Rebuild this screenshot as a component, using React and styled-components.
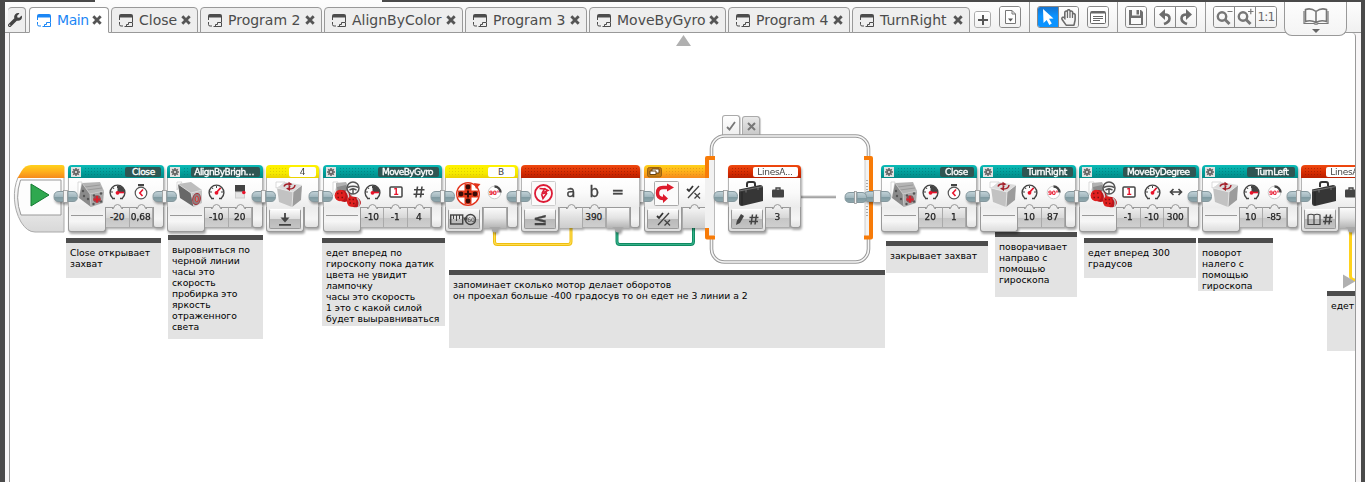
import React from "react";
import styled, { createGlobalStyle, css } from "styled-components";
import { FaWrench, FaRegHandPaper } from "react-icons/fa";

const Global = createGlobalStyle`
  * { box-sizing: border-box; }
  body { margin: 0; background: #4a4a4a; font-family: "DejaVu Sans", sans-serif; overflow: hidden; }
  svg { display: block; flex: none; overflow: visible; }
`;

/* ---------- window frame ---------- */
const Frame = styled.div`
  width: 1365px;
  height: 482px;
  padding: 2px 4px 0 5px;
  display: flex;
  flex-direction: column;
  background: linear-gradient(#fdfdfd, #fdfdfd) 95px 0 / 287px 2px no-repeat, #4a4a4a;
`;
const Bar = styled.div`
  height: 31px;
  flex: none;
  display: flex;
  align-items: flex-end;
  padding-left: 3px;
  position: relative;
  z-index: 2;
  background: linear-gradient(#fdfdfd, #f0f0f0);
  box-shadow: inset 0 -1px #999;
`;
const Main = styled.div`
  flex: 1;
  display: flex;
  padding: 0 5px 0 4px;
  background: #f8f6f7;
`;
const Canvas = styled.div`
  flex: 1;
  position: relative;
  overflow: hidden;
  background: #fff;
  border-left: 1px solid #999;
  border-right: 1px solid #999;
  border-top-right-radius: 4px;
`;

/* ---------- tabs ---------- */
const Tab = styled.div`
  width: ${(p) => p.$w}px;
  height: 26px;
  margin-right: 2px;
  padding-left: 7px;
  display: flex;
  align-items: center;
  border: 1px solid #999;
  border-bottom-color: ${(p) => (p.$active ? "#fff" : "#999")};
  border-radius: 4px 4px 0 0;
  background: ${(p) => (p.$active ? "#fff" : "#eeeeee")};
  color: ${(p) => (p.$active ? "#1c87f5" : "#4c4c4c")};
  font-size: 14px;
  letter-spacing: ${(p) => (p.$active ? -0.4 : 0)}px;
  white-space: nowrap;
`;
const TabText = styled.span`
  flex: 1;
  margin-left: 6px;
`;
const CloseX = styled.svg`
  margin-right: 6px;
  color: #555;
`;
const WrenchTab = styled(Tab)`
  padding-left: 0;
  border-left: 0;
  margin-right: 3px;
  color: #444;
`;

const PageIcon = () => (
  <svg width="14" height="13" viewBox="0 0 14 13" fill="none" stroke="currentColor">
    <path d="M.5 2.500V6M.5 8V10.500Q.5 12 2 12H4M5.500 12.500H8M13.500 2.500V8" />
    <path d="M0 3.500V2Q0 0 2 0H12Q14 0 14 2V3.500Z" fill="currentColor" stroke="none" />
    <path d="M7.500 12.500V10.500H9.500V8.500H13.500V12.500Z" />
  </svg>
);
const X = () => (
  <CloseX width="10" height="10" viewBox="0 0 10 10">
    <path d="M1.300 1.300L8.700 8.700M8.700 1.300L1.300 8.700" stroke="currentColor" strokeWidth="2.800" />
  </CloseX>
);

/* ---------- toolbar ---------- */
const Tools = styled.div`
  height: 31px;
  flex: 1;
  display: flex;
  align-items: flex-start;
`;
const Group = styled.div`
  display: flex;
  height: 22px;
  margin: 4px 0 0 ${(p) => p.$ml}px;
  border: 1px solid #888;
  border-radius: 3px;
  background: #fafafa;
  overflow: hidden;
`;
const Tool = styled.div`
  width: ${(p) => p.$w || 20}px;
  height: 20px;
  display: flex;
  align-items: center;
  justify-content: center;
  color: ${(p) => (p.$on ? "#fff" : "#6b6b6b")};
  background: ${(p) => (p.$on ? "linear-gradient(#1573cf, #0b93ff 45%)" : "linear-gradient(#fff, #f1f1f1)")};
  font: 12px "DejaVu Sans", sans-serif;
  letter-spacing: -0.8px;
  & + & { border-left: 1px solid #888; }
`;
const AddTab = styled(Group)`
  height: 17px;
  margin: 9px 0 0 ${(p) => p.$ml}px;
  border-color: #aaa;
  ${Tool} { height: 15px; width: 15px; }
`;
const Divider = styled.div`
  width: 1px;
  height: 31px;
  margin-left: ${(p) => p.$ml}px;
  background: #999;
`;
const BookTab = styled.div`
  width: 63px;
  height: 34px;
  margin-left: 7px;
  display: flex;
  flex-direction: column;
  align-items: center;
  padding-top: 5px;
  gap: 4px;
  background: linear-gradient(#fdfdfd, #f4f4f4);
  border: 1px solid #999;
  border-top: 0;
  border-radius: 0 0 8px 8px;
`;

const Magnifier = ({ plus }) => (
  <svg width="18" height="18" viewBox="0 0 18 18" fill="none" stroke="#777">
    <circle cx="7" cy="8.500" r="4.200" strokeWidth="2.400" />
    <path d="M10 11.500L14.500 16" strokeWidth="3" />
    <path d={plus ? "M12 3.500H17.500M14.800 .8V6.200" : "M12.500 3.500H17.500"} strokeWidth="1.200" />
  </svg>
);
const Turn = ({ flip }) => (
  <svg width="14" height="16" viewBox="0 0 14 16">
    <g transform={flip ? "translate(14 0) scale(-1 1)" : undefined}>
      <path d="M1 5.500L7 0V11Z" fill="#6b6b6b" />
      <path d="M5 5.500H6.500Q11.500 5.500 11.500 9.500Q11.500 13 6 15" fill="none" stroke="#6b6b6b" strokeWidth="2.600" />
    </g>
  </svg>
);

/* ---------- block icons ---------- */
const GyroIcon = () => (
  <svg width="26" height="27" viewBox="0 0 26 27">
    <path d="M0 7V1H9L3 6Z" fill="#fff" stroke="#ccc" strokeWidth=".7" />
    <path d="M1 7L9 1L26 4L17 11Z" fill="#dcdcdc" />
    <path d="M1 7L17 11L16 26L3 21Z" fill="#c2c2c2" />
    <path d="M17 11L26 4L25 19L16 26Z" fill="#9c9c9c" />
    <path d="M1 7L17 11L26 4M17 11L16 26" fill="none" stroke="#ececec" strokeWidth=".8" />
    <path d="M8 5.500Q9 2.500 13 3M19 4Q18.500 8 13.500 8" fill="none" stroke="#a5202a" strokeWidth="1.500" />
    <path d="M12.500 .8L16.500 3.200L12.500 5ZM14 5.800L10 7.600L14 10Z" fill="#a5202a" />
    <circle cx="13.500" cy="5.500" r="1" fill="#a5202a" />
  </svg>
);
const MotorIcon = () => (
  <svg width="26" height="27" viewBox="0 0 26 27">
    <path d="M0 17V1H4L2 12Z" fill="#fff" stroke="#ccc" strokeWidth=".7" />
    <path d="M4 2L22 1L26 10L12 13Z" fill="#b4b4b4" />
    <path d="M4 2L12 13L13 26L1 17Z" fill="#8a8a8a" />
    <path d="M12 13L26 10L25 22L13 26Z" fill="#a9a9a9" />
    <path d="M7 6L22 4M9 9L24 7" stroke="#9a9a9a" />
    <path d="M4 2L12 13L26 10M12 13L13 26" fill="none" stroke="#c9c9c9" strokeWidth=".8" />
    <g fill="#555">
      <circle cx="5" cy="10" r="1.200" /><circle cx="6" cy="15" r="1.200" /><circle cx="10" cy="18" r="1.200" />
      <circle cx="16" cy="14.500" r="1.200" /><circle cx="23" cy="12.500" r="1.200" /><circle cx="15.500" cy="23" r="1.200" /><circle cx="23" cy="20.500" r="1.200" />
    </g>
    <circle cx="19" cy="18" r="3.800" fill="#8d5356" />
    <path d="M15.500 18.500H22.500M19 15V21.500" stroke="#d8202c" strokeWidth="2" />
  </svg>
);
const SensorIcon = () => (
  <svg width="26" height="27" viewBox="0 0 26 27">
    <path d="M0 9V1H5L2 5Z" fill="#fff" stroke="#ccc" strokeWidth=".7" />
    <path d="M1 3L14 1L25 9L14 12Z" fill="#bdbdbd" />
    <path d="M1 3L14 12L17 26L3 17Z" fill="#686868" />
    <path d="M14 12L25 9V22L17 26Z" fill="#c4c4c4" />
    <path d="M14 12L25 9M14 12L17 26M1 3L14 12" fill="none" stroke="#ddd" strokeWidth=".8" />
    <ellipse cx="19.500" cy="18" rx="3.800" ry="5.600" fill="#8d8080" stroke="#a5323a" transform="rotate(12 19.500 18)" />
    <ellipse cx="19.800" cy="18" rx="1.600" ry="2.800" fill="#999" stroke="#d33" />
  </svg>
);
const WheelsIcon = () => (
  <svg width="28" height="27" viewBox="0 0 28 27">
    <path d="M0 14V1H5L3 8Z" fill="#fff" stroke="#ccc" strokeWidth=".7" />
    <path d="M3 2L13 1L17 9L20 17L9 20L3 10Z" fill="#b2b2b2" />
    <path d="M4 6L13 4L15 11L5 14Z" fill="#8c8c8c" />
    <circle cx="20" cy="7" r="6" fill="#fafafa" stroke="#555" strokeWidth="1.500" />
    <path d="M14.500 6.500Q20 4 25.500 6.500M20 7V13M16.500 9L20 7.500L23.500 9" fill="none" stroke="#555" strokeWidth="1.500" />
    <ellipse cx="10.500" cy="15" rx="7.500" ry="5.800" fill="#bb151b" transform="rotate(15 10.500 15)" />
    <ellipse cx="7" cy="14.500" rx="5.400" ry="5.800" fill="#e0201f" />
    <path d="M13 10Q17 14 15 20" fill="none" stroke="#d5d5d5" strokeWidth="1.600" />
    <ellipse cx="21.500" cy="21" rx="6.500" ry="5.200" fill="#bb151b" transform="rotate(15 21.500 21)" />
    <ellipse cx="18.500" cy="20.500" rx="4.600" ry="5.200" fill="#e0201f" />
    <path d="M24 17Q27.500 20.500 25.500 26" fill="none" stroke="#bbb" strokeWidth="1.500" />
    <path d="M4 12.500H5.500M8 12H9.500M4.500 16.500H6M8.500 16.500H10M16 18.500H17.500M19.500 18.500H21M16.500 22H18M20 22.500H21.500" stroke="#7b1010" strokeWidth="1.500" />
  </svg>
);
const RotationIcon = () => (
  <svg width="26" height="26" viewBox="0 0 26 26">
    <circle cx="13" cy="13" r="11.300" fill="#fff" stroke="#e3331c" strokeWidth="1.400" />
    <path d="M9.500 3H16.500V9.500H23V16.500H16.500V23H9.500V16.500H3V9.500H9.500Z" fill="#e3391b" />
    <g fill="#3a0d08"><circle cx="13" cy="6" r="2.400" /><circle cx="13" cy="20" r="2.400" /><circle cx="6" cy="13" r="2.400" /><circle cx="20" cy="13" r="2.400" /><path d="M9.500 12H12V9.500H14V12H16.500V14H14V16.500H12V14H9.500Z" /></g>
    <path d="M19 2L25.500 3L21 8Z" fill="#e3331c" />
  </svg>
);
const CaseIcon = () => (
  <svg width="26" height="25" viewBox="0 0 26 25">
    <path d="M9 6V3Q9 1 11 1H15Q17 1 17 3V5" fill="none" stroke="#333" strokeWidth="2" />
    <path d="M1 8.500L22 4Q25 4 25 7V20L4 25Q1 25 1 22Z" fill="#363636" />
    <path d="M1 10L25 5.500M8 8V11.500M20 6V9" fill="none" stroke="#777" strokeWidth="1" />
    <path d="M4 11V24" stroke="#222" />
  </svg>
);
const FlatCase = () => (
  <svg width="12" height="11" viewBox="0 0 12 11">
    <path d="M4 3V1H8V3" fill="none" stroke="#444" strokeWidth="1.300" />
    <rect y="2.500" width="12" height="8" rx="1" fill="#444" />
  </svg>
);
const CompareIcon = () => (
  <svg width="26" height="26" viewBox="0 0 26 26">
    <rect x=".5" y=".5" width="24" height="24" rx="1" fill="#fbfbfb" stroke="#ccc" />
    <circle cx="12.500" cy="12.500" r="8.500" fill="none" stroke="#dd1b35" strokeWidth="1.800" />
    <path d="M8.500 7.500L13.500 8L11 12.500M10.500 13L16 11.500M16 12L12 17.500L10.500 13" fill="none" stroke="#dd1b35" strokeWidth="1.600" />
    <path d="M13 7.500L17 9.500L12.500 11.500" fill="none" stroke="#dd1b35" strokeWidth="1.500" />
  </svg>
);
const SwitchIcon = () => (
  <svg width="26" height="26" viewBox="0 0 26 26">
    <rect x=".5" y=".5" width="24" height="24" rx="1" fill="#fbfbfb" stroke="#aaa" />
    <path d="M14 6.500H9Q3.500 6.500 3.500 12Q3.500 17.500 9 17.500H11" fill="none" stroke="#dd1b2c" strokeWidth="3.400" />
    <path d="M13 2.500L20 6.500L13 10.500ZM9 13L14 17.500L9 22Z" fill="#dd1b2c" />
  </svg>
);
const Gauge = ({ power }) => (
  <svg width="17" height="16" viewBox="0 0 17 16">
    <path d="M3.500 14A7.400 7.400 0 1 1 13.500 14M3 14.500H6M11 14.500H14" fill="none" stroke="#444" strokeWidth="1.400" />
    <path d="M8.500 2V4M2 8H4M15 8H13M4 3.500L5 5M13 3.500L12 5" stroke="#444" />
    {power ? (
      <><path d="M8.500 8.500V1.500A7 7 0 0 1 15.500 8.500Z" fill="#444" /><path d="M8 8.500H15" stroke="#e8132b" strokeWidth="1.600" /></>
    ) : (
      <path d="M8 9L12.500 4" stroke="#e8132b" strokeWidth="1.800" />
    )}
    <circle cx="8.500" cy="8.800" r="1.900" fill="#e8132b" />
  </svg>
);
const Stopwatch = () => (
  <svg width="14" height="16" viewBox="0 0 14 16">
    <rect x="4" y="0" width="6" height="2.200" fill="#444" />
    <circle cx="7" cy="9" r="5.800" fill="#fff" stroke="#555" strokeWidth="1.200" />
    <path d="M9 5.500L5.800 9L8.500 12" fill="none" stroke="#e8132b" strokeWidth="1.600" />
  </svg>
);
const ColorCard = () => (
  <svg width="12" height="14" viewBox="0 0 12 14">
    <rect x="1" y="0" width="10" height="7" fill="#444" />
    <rect x="1.500" y="7" width="9" height="6" fill="#e5e5e5" stroke="#ccc" />
    <circle cx="9.800" cy="7.500" r="1.800" fill="#e8132b" />
  </svg>
);
const Angle = () => (
  <svg width="15" height="15" viewBox="0 0 15 15">
    <circle cx="7.500" cy="7.500" r="6.300" fill="#fff" stroke="#ccc" />
    <path d="M7.500 1.500A6 6 0 0 1 13.500 7.500" fill="none" stroke="#444" strokeWidth="2.400" />
    <text x="7" y="10" fontSize="6" fontWeight="bold" textAnchor="middle" fill="#e8132b" letterSpacing="-.5">90°</text>
  </svg>
);
const OneBox = () => (
  <svg width="14" height="12" viewBox="0 0 14 12">
    <rect x="1" y="1" width="12" height="10" rx="1" fill="#fff" stroke="#444" strokeWidth="1.500" />
    <text x="7" y="9" fontSize="8" fontWeight="bold" textAnchor="middle" fill="#e8132b">1</text>
  </svg>
);
const Glyph = styled.span`
  color: #444;
  font-size: ${(p) => p.$s || 14}px;
  font-weight: ${(p) => (p.$b ? "bold" : "normal")};
  line-height: 16px;
  -webkit-text-stroke: 0.3px #444;
`;
const TwoWay = () => (
  <svg width="14" height="8" viewBox="0 0 14 8">
    <path d="M2 4H12M4.500 1L1.500 4L4.500 7M9.500 1L12.500 4L9.500 7" fill="none" stroke="#444" strokeWidth="1.600" />
  </svg>
);
const CheckCross = () => (
  <svg width="15" height="14" viewBox="0 0 15 14">
    <path d="M1 4L3 6L7 1" fill="none" stroke="#333" strokeWidth="1.800" />
    <path d="M2 13L13 1M8.500 8L14 13.500M14 8L8.500 13.500" fill="none" stroke="#444" strokeWidth="1.300" />
  </svg>
);
const Download = () => (
  <svg width="14" height="13" viewBox="0 0 14 13">
    <path d="M7 0V6M1 11.800H13" stroke="#444" strokeWidth="1.800" />
    <path d="M2.500 4.500H11.500L7 9.500Z" fill="#444" />
  </svg>
);
const RulerDeg = () => (
  <svg width="28" height="13" viewBox="0 0 28 13" fill="none" stroke="#444">
    <rect x=".7" y="2" width="12" height="9" strokeWidth="1.400" />
    <path d="M3.500 2V6M6.500 2V8M9.500 2V6" />
    <circle cx="20.500" cy="6.500" r="5" strokeWidth="1.400" />
    <path d="M13 4.500L15.500 9L18 4.500Z" fill="#444" stroke="none" />
    <text x="21" y="9" fontSize="6" textAnchor="middle" fill="#444" stroke="none">60</text>
  </svg>
);
const PencilHash = () => (
  <svg width="24" height="13" viewBox="0 0 24 13">
    <path d="M1 12L1.800 8L6 1L9 3L5 10Z" fill="#444" />
    <path d="M17.500 1.500L16 11.500M21.500 1.500L20 11.500M14.500 4.500H23.500M14 8.500H23" stroke="#444" strokeWidth="1.500" />
  </svg>
);
const BookHash = () => (
  <svg width="26" height="13" viewBox="0 0 26 13" fill="none" stroke="#444">
    <path d="M1 2Q4 .5 7 2Q10 .5 13 2V11.500H1ZM7 2V11.500" strokeWidth="1.200" />
    <path d="M19.500 1.500L18 11.500M23.500 1.500L22 11.500M16.500 4.500H25.500M16 8.500H25" strokeWidth="1.500" />
  </svg>
);
const Gear = () => (
  <svg width="8" height="8" viewBox="0 0 8 8">
    <circle cx="4" cy="4" r="2" fill="none" stroke="#666" strokeWidth="1.800" />
    <path d="M4 0V1.500M4 6.500V8M0 4H1.500M6.500 4H8M1.200 1.200L2.300 2.300M5.700 5.700L6.800 6.800M6.800 1.200L5.700 2.300M2.300 5.700L1.200 6.800" stroke="#666" strokeWidth="1.500" />
  </svg>
);

/* ---------- programming blocks ---------- */
const HEAD = {
  teal: "linear-gradient(#0cbcb8, #009c98 60%, #048a87)",
  yellow: "linear-gradient(#fff200, #f7ec00 60%, #ead000)",
  red: "linear-gradient(#f04a10, #d42a00 60%, #b82000)",
  orange: "linear-gradient(#ffd21c, #ffb01c 50%, #f58a1c)",
};
const DOTS = { teal: "#00706f", yellow: "#c9b800", red: "#8a1500", orange: "#d08a10" };

const BlockBox = styled.div`
  position: absolute;
  left: ${(p) => p.$x - 10}px;
  top: 132px;
  filter: drop-shadow(1px 2px 1px rgba(0, 0, 0, 0.35));
`;
const Header = styled.div`
  height: 13px;
  display: flex;
  align-items: center;
  gap: 3px;
  padding: 0 3px;
  border-radius: ${(p) => (p.$open ? "4px 0 0 0" : "4px 4px 0 0")};
  background: ${(p) => HEAD[p.$c]};
`;
const GearBox = styled.div`
  width: 10px;
  height: 10px;
  display: flex;
  align-items: center;
  justify-content: center;
  background: #e2e2e2;
`;
const Dots = styled.div`
  flex: 1;
  height: 9px;
  opacity: 0.55;
  background: radial-gradient(circle, ${(p) => DOTS[p.$c]} 0.8px, transparent 1px) 0 0 / 3px 3px;
`;
const Label = styled.div`
  width: ${(p) => p.$w}px;
  height: 10px;
  line-height: 10px;
  padding-right: ${(p) => (p.$light ? 0 : 6)}px;
  font-size: 9px;
  letter-spacing: ${(p) => p.$ls || -0.3}px;
  white-space: nowrap;
  text-align: ${(p) => (p.$light ? "center" : "right")};
  color: ${(p) => (p.$light ? "#444" : "#fff")};
  -webkit-text-stroke: ${(p) => (p.$light ? "0" : "0.35px #fff")};
  background: ${(p) => (p.$light ? "#fff" : "#2f5653")};
  border-radius: 2px;
`;
const Upper = styled.div`
  height: 29px;
  display: flex;
  background: linear-gradient(#fff, #fafafa 50%, #ececec);
  border-left: 1px solid #b5b5b5;
  border-right: ${(p) => (p.$open ? 0 : "1px solid #b5b5b5")};
`;
const BigIcon = styled.div`
  width: 37px;
  padding: 3px 0 0 9px;
  position: relative;
  z-index: 1;
`;
const ParamIcon = styled.div`
  width: 23.5px;
  height: 28px;
  display: flex;
  align-items: center;
  justify-content: center;
`;
const Lower = styled.div`
  display: flex;
  align-items: flex-start;
  height: 25px;
`;
const Tray = styled.div`
  width: 38px;
  height: 25px;
  padding: ${(p) => (p.$btn ? "2px 2px" : "8px 2px 0")};
  border: 1px solid #999;
  border-width: 0 1px 1px;
  border-radius: 0 0 3px 3px;
  background: linear-gradient(#ececec, #f6f6f6 60%, #ddd);
`;
const TrayLine = styled.div`
  height: 1px;
  background: #999;
`;
const ModeButton = styled.div`
  height: 20px;
  display: flex;
  align-items: center;
  justify-content: center;
  border: 1px solid #999;
  border-top-color: #fff;
  border-radius: 2px;
  background: linear-gradient(#fafafa, #dedede 48%, #b9b9b9 52%, #c4c4c4);
`;
const Slot = styled.div`
  position: relative;
  width: 23.5px;
  height: ${(p) => (p.$kind ? 21 : 20)}px;
  display: flex;
  align-items: center;
  justify-content: center;
  padding-bottom: 2px;
  font-size: 9px;
  color: #222;
  -webkit-text-stroke: 0.25px #222;
  border-top: 1px solid #999;
  border-right: 1px solid #aaa;
  background: linear-gradient(#ededed, #d8d8d8 50%, #c6c6c6 52%, #cfcfcf);
  ${(p) => p.$kind && css`
    border-left: 1px solid #aaa;
    background: linear-gradient(#fafafa, #e3e3e3 50%, #b4b4b4);
  `}
  ${(p) => p.$kind === "in" && css`
    background: linear-gradient(#f4f4f4, #dfdfdf 50%, #cdcdcd);
  `}
`;
const Bump = styled.svg`
  position: absolute;
  left: 6px;
  top: -4px;
`;
const Plug = styled.svg`
  position: absolute;
  left: 5px;
  bottom: -5px;
`;
const Cap = styled.div`
  width: ${(p) => p.$w}px;
  height: 21px;
  border: 1px solid #999;
  border-width: 0 1px 1px;
  border-radius: 0 0 3px 3px;
  background: linear-gradient(#ececec, #f5f5f5 60%, #e2e2e2);
`;
const Joint = styled.svg`
  position: absolute;
  left: ${(p) => p.$x}px;
  top: ${(p) => p.$y}px;
`;

const Connector = ({ x, y, collar = 4 }) => {
  const r = 11 + collar;
  return (
    <Joint $x={x} $y={y} width={22 + collar} height="13" viewBox={`0 0 ${22 + collar} 13`}>
      <defs>
        <linearGradient id="pill" x1="0" y1="0" x2="0" y2="1">
          <stop offset="0" stopColor="#c3d3d8" /><stop offset=".5" stopColor="#a3b8bf" /><stop offset=".52" stopColor="#7d989f" /><stop offset="1" stopColor="#91a9af" />
        </linearGradient>
      </defs>
      <path d="M11 1.500H6Q1 1.500 1 6.500Q1 11.500 6 11.500H11Z" fill="url(#pill)" stroke="#84979d" />
      <rect x="10.500" y=".5" width={collar} height="12" fill="#f2f2f2" stroke="#9a9a9a" strokeWidth=".8" />
      <path d={`M${r} 1.500H${r + 5}Q${r + 9.5} 1.500 ${r + 9.5} 6.500Q${r + 9.5} 11.500 ${r + 5} 11.500H${r}Z`} fill="url(#pill)" stroke="#84979d" />
    </Joint>
  );
};

const Block = ({ x, c, gear, label, lw, ls, light, big, params = [], mode, cap = 11, open, headIcon, collar = 4 }) => (
  <BlockBox $x={x}>
    <Header $c={c} $open={open}>
      {gear && <GearBox><Gear /></GearBox>}
      {headIcon}
      <Dots $c={c} />
      {label && <Label $w={lw} $ls={ls} $light={light}>{label}</Label>}
    </Header>
    <Upper $open={open}>
      <BigIcon>{big}</BigIcon>
      {params.map((p, i) => <ParamIcon key={i}>{p.icon}</ParamIcon>)}
    </Upper>
    <Lower>
      <Tray $btn={!!mode}>{mode ? <ModeButton>{mode}</ModeButton> : <TrayLine />}</Tray>
      {params.map((p, i) => (
        <Slot key={i} $kind={p.kind}>
          {p.kind !== "out" && (
            <Bump width="11" height="6" viewBox="0 0 11 6">
              <path d="M0 4.500H1.500Q2 .5 5.500 .5Q9 .5 9.500 4.500H11" fill="#eee" stroke="#999" />
            </Bump>
          )}
          {p.value}
          {p.kind === "out" && (
            <Plug width="12" height="6" viewBox="0 0 12 6"><path d="M0 0H12L9 2V4Q6 7 3 4V2Z" fill="#a8a8a8" /></Plug>
          )}
        </Slot>
      ))}
      <Cap $w={cap} />
    </Lower>
    <Connector x={-11 - collar} y={25} collar={collar} />
  </BlockBox>
);

/* ---------- comments ---------- */
const NoteBox = styled.div`
  position: absolute;
  left: ${(p) => p.$x - 10}px;
  top: ${(p) => p.$y - 33}px;
  width: ${(p) => p.$w}px;
  height: ${(p) => p.$h}px;
  padding: 4px 0 0 4px;
  border-top: 5px solid #4c4c4c;
  background: #e3e3e3;
  color: #000;
  font-size: 9.25px;
  line-height: 11px;
  white-space: pre;
`;

/* ---------- canvas drawings ---------- */
const Layer = styled.svg`
  position: absolute;
  left: -10px;
  top: -33px;
`;
const CaseTab = styled.div`
  position: absolute;
  left: ${(p) => p.$x - 10}px;
  top: ${(p) => p.$y - 33}px;
  width: 18px;
  height: ${(p) => 135 - p.$y}px;
  display: flex;
  align-items: center;
  justify-content: center;
  border: 1px solid #aaa;
  border-bottom: 0;
  border-radius: 3px 3px 0 0;
  background: ${(p) => (p.$on ? "linear-gradient(#fff, #eee)" : "linear-gradient(#e8e8e8, #c8c8c8)")};
  box-shadow: 1px 1px 1px rgba(0, 0, 0, 0.2);
`;

const tabs = [
  ["Main", 80], ["Close", 87], ["Program 2", 122], ["AlignByColor", 139],
  ["Program 3", 122], ["MoveByGyro", 137], ["Program 4", 122], ["TurnRight", 118],
];

const hash = (
  <svg width="12" height="12" viewBox="0 0 12 12"><path d="M4.500 .5L3 11.500M9 .5L7.500 11.500M1 3.800H11.500M.5 8.200H11" stroke="#444" strokeWidth="1.600" /></svg>
);

const blocks = [
  { x: 68, c: "teal", gear: 1, label: "Close", lw: 36, big: <MotorIcon />, params: [{ icon: <Gauge power />, value: "-20" }, { icon: <Stopwatch />, value: "0,68" }] },
  { x: 167, c: "teal", gear: 1, label: "AlignByBrigh…", lw: 69, ls: -0.55, big: <SensorIcon />, params: [{ icon: <Gauge />, value: "-10" }, { icon: <ColorCard />, value: "20" }] },
  { x: 266, c: "yellow", label: "4", lw: 27, light: 1, big: <GyroIcon />, mode: <Download />, cap: 15 },
  { x: 322.5, c: "teal", gear: 1, label: "MoveByGyro", lw: 61, ls: -0.6, big: <WheelsIcon />, params: [{ icon: <Gauge power />, value: "-10" }, { icon: <OneBox />, value: "-1" }, { icon: hash, value: "4" }] },
  { x: 445, c: "yellow", label: "B", lw: 27, light: 1, big: <RotationIcon />, mode: <RulerDeg />, params: [{ icon: <Angle />, kind: "out" }] },
  { x: 521, c: "red", big: <CompareIcon />, mode: <Glyph $s={17} $b>≤</Glyph>, params: [{ icon: <Glyph $s={15}>a</Glyph>, kind: "in" }, { icon: <Glyph $s={15}>b</Glyph>, value: "390" }, { icon: <Glyph $s={15}>=</Glyph>, kind: "out" }], cap: 10 },
  { x: 728, c: "red", label: "LinesA...", lw: 45, light: 1, big: <CaseIcon />, mode: <PencilHash />, params: [{ icon: <FlatCase />, value: "3" }] },
  { x: 881, c: "teal", gear: 1, label: "Close", lw: 34, big: <MotorIcon />, collar: 7, params: [{ icon: <Gauge power />, value: "20" }, { icon: <Stopwatch />, value: "1" }] },
  { x: 980, c: "teal", gear: 1, label: "TurnRight", lw: 51, ls: -0.35, big: <GyroIcon />, params: [{ icon: <Gauge />, value: "10" }, { icon: <Angle />, value: "87" }] },
  { x: 1079, c: "teal", gear: 1, label: "MoveByDegree", lw: 73, ls: -0.5, big: <WheelsIcon />, params: [{ icon: <OneBox />, value: "-1" }, { icon: <Gauge />, value: "-10" }, { icon: <TwoWay />, value: "300" }] },
  { x: 1201.5, c: "teal", gear: 1, label: "TurnLeft", lw: 48, ls: -0.4, big: <GyroIcon />, params: [{ icon: <Gauge power />, value: "10" }, { icon: <Angle />, value: "-85" }] },
  { x: 1301, c: "red", label: "LinesA...", lw: 45, light: 1, big: <CaseIcon />, mode: <BookHash />, params: [{ icon: <FlatCase />, kind: "out" }] },
];

const notes = [
  [66, 238, 95, 40, "Close открывает\nзахват"],
  [168, 235, 95, 104, "выровниться по\nчерной линии\nчасы это\nскорость\nпробирка это\nяркость\nотраженного\nсвета"],
  [322, 238, 123, 88, "едет вперед по\nгироскопу пока датик\nцвета не увидит\nлампочку\nчасы это скорость\n1 это с какой силой\nбудет выыравниваться"],
  [449, 270, 436, 78, "запоминает сколько мотор делает оборотов\nон проехал больше -400 градосув то он едет не 3 линии а 2"],
  [886, 241, 102, 32, "закрывает захват"],
  [995, 232, 82, 65, "поворачивает\nнаправо с\nпомощью\nгироскопа"],
  [1084, 238, 112, 40, "едет вперед 300\nградусов"],
  [1198, 238, 75, 53, "поворот\nналего с\nпомощью\nгироскопа"],
  [1327, 291, 60, 60, "едет"],
];

const FoldIcon = () => (
  <svg width="15" height="10" viewBox="0 0 15 10">
    <rect x=".5" y=".5" width="14" height="9.500" rx="2" fill="#c27a10" stroke="#9c6410" />
    <path d="M5 2H12V6H5Z" fill="#fff" stroke="#6b4410" /><path d="M3 4H9V7.500H3Z" fill="#fff" stroke="#6b4410" />
  </svg>
);

export default function App() {
  return (
    <Frame>
      <Global />
      <Bar>
        <WrenchTab $w={18}><FaWrench size={14} /></WrenchTab>
        {tabs.map(([t, w], i) => (
          <Tab key={t} $w={w} $active={i === 0}>
            <PageIcon /><TabText>{t}</TabText><X />
          </Tab>
        ))}
        <Tools>
          <AddTab $ml={2}><Tool><svg width="10" height="10" viewBox="0 0 10 10"><path d="M5 0V10M0 5H10" stroke="#555" strokeWidth="2" /></svg></Tool></AddTab>
          <Group $ml={8}><Tool>
            <svg width="11" height="14" viewBox="0 0 11 14"><path d="M.5 .5H7L10.500 4V13.500H.5ZM7 .5V4H10.500" fill="#fff" stroke="#777" /><path d="M3 8.500H8L5.500 11.500Z" fill="#555" /></svg>
          </Tool></Group>
          <Divider $ml={8} />
          <Group $ml={7}>
            <Tool $on>
              <svg width="12" height="16" viewBox="0 0 12 16"><path d="M1 0L11.500 9.500L7 9.800L9.800 14.500L7.300 16L4.700 11L1.500 14Z" fill="#fff" /></svg>
            </Tool>
            <Tool><FaRegHandPaper size={17} /></Tool>
          </Group>
          <Group $ml={8}><Tool>
            <svg width="16" height="13" viewBox="0 0 16 13"><rect x=".5" y=".5" width="15" height="12" rx="1" fill="#fff" stroke="#666" /><path d="M1 1.500H15" stroke="#666" strokeWidth="2" /><path d="M3 5.500H13M3 7.500H13M3 9.500H10" stroke="#666" /></svg>
          </Tool></Group>
          <Divider $ml={8} />
          <Group $ml={7}><Tool>
            <svg width="14" height="15" viewBox="0 0 14 15"><path d="M0 0H12L14 2V15H0Z" fill="#6f6f6f" /><rect x="3" y="0" width="8" height="5.500" fill="#fafafa" /><rect x="7.500" y="0" width="2.500" height="4.500" fill="#6f6f6f" /><rect x="2" y="8" width="10" height="6" fill="#fafafa" /></svg>
          </Tool></Group>
          <Group $ml={7}><Tool><Turn /></Tool><Tool $w={21}><Turn flip /></Tool></Group>
          <Divider $ml={8} />
          <Group $ml={7}><Tool><Magnifier /></Tool><Tool $w={21}><Magnifier plus /></Tool><Tool $w={21}>1:1</Tool></Group>
          <BookTab>
            <svg width="26" height="18" viewBox="0 0 26 18" fill="none" stroke="#777" strokeWidth="1.600">
              <path d="M13 4.500Q8 .5 2.500 2.500V14.500Q8 12.500 13 15.500Q18 12.500 23.500 14.500V2.500Q18 .5 13 4.500V15" />
              <path d="M1 4V16.500H11Q13 18 15 16.500H25V4" strokeWidth="1.200" />
            </svg>
            <svg width="8" height="4" viewBox="0 0 8 4"><path d="M0 0H8L4 4Z" fill="#666" /></svg>
          </BookTab>
        </Tools>
      </Bar>
      <Main>
        <Canvas>
          {notes.map(([x, y, w, h, t]) => <NoteBox key={x} $x={x} $y={y} $w={w} $h={h}>{t}</NoteBox>)}
          <CaseTab $x={722} $y={115} $on><svg width="10" height="10" viewBox="0 0 10 10"><path d="M1 6L3.500 8.500L9 1" fill="none" stroke="#777" strokeWidth="1.800" /></svg></CaseTab>
          <CaseTab $x={742} $y={116}><svg width="9" height="9" viewBox="0 0 9 9"><path d="M1 1L8 8M8 1L1 8" stroke="#777" strokeWidth="2" /></svg></CaseTab>
          <Layer width="1365" height="482" viewBox="0 0 1365 482" fill="none">
            <path d="M676 46L683.500 35L691 46Z" fill="#b0b0b0" />
            <rect x="711.500" y="136" width="157" height="126" rx="13" stroke="#999" strokeWidth="3.600" fill="#fff" />
            <rect x="711.500" y="136" width="157" height="126" rx="13" stroke="#f6f6f6" strokeWidth="1.600" />
            <path d="M801 197H836" stroke="#999" strokeWidth="2.400" />
            <path d="M801 196.800H836" stroke="#ccc" strokeWidth=".8" />
            <path d="M494.500 230V241.500Q494.500 244.500 497.500 244.500H568Q571 244.500 571 241.500V228" stroke="#eebf10" strokeWidth="3" />
            <path d="M494.500 230V241.500Q494.500 244.500 497.500 244.500H568Q571 244.500 571 241.500V228" stroke="#ffdc50" strokeWidth="1.200" />
            <path d="M617 230V241.500Q617 244.500 620 244.500H690.500Q693.500 244.500 693.500 241.500V228" stroke="#0f8a62" strokeWidth="3" />
            <path d="M617 230V241.500Q617 244.500 620 244.500H690.500Q693.500 244.500 693.500 241.500V228" stroke="#35b089" strokeWidth="1.200" />
            <path d="M1350.500 230V276Q1350.500 280 1356 280" stroke="#ffd21c" strokeWidth="3" />
            <path d="M1343 274.500L1355 281.500L1343 288.500Z" fill="#b0b0b0" />
            <path d="M18 177.500C12.500 190 13 208 21 222Q27 232 35 232H64V177.500Z" fill="url(#body)" stroke="#aaa" />
            <path d="M62 165H31Q25 165 21.500 171L17.500 178H64.500V167Q64.500 165 62 165Z" fill="url(#startHead)" />
            <path d="M20.500 180H61V215H21Q14.500 198 20.500 180Z" fill="#fdfdfd" stroke="#999" />
            <path d="M31 184V206L49 195Z" fill="#2fa84f" stroke="#157a32" />
            <path d="M865 158H870V237H865Z" fill="#f3f3f3" stroke="#ccc" />
            <path d="M864 158H871V237.500H864" stroke="#f77b08" strokeWidth="4" strokeLinejoin="round" />
            <path d="M867 180V192M867 206V218" stroke="#aaa" strokeWidth="2" strokeDasharray="1 2" />
            <defs>
              <linearGradient id="startHead" x1="0" y1="0" x2="0" y2="1"><stop offset="0" stopColor="#ffd21c" /><stop offset=".5" stopColor="#ffb01c" /><stop offset="1" stopColor="#f58a1c" /></linearGradient>
              <linearGradient id="body" x1="0" y1="0" x2="0" y2="1"><stop offset="0" stopColor="#fff" /><stop offset="1" stopColor="#d8d8d8" /></linearGradient>
            </defs>
          </Layer>
          <Block x={644} c="orange" open headIcon={<FoldIcon />} big={<SwitchIcon />} mode={<CheckCross />} params={[{ icon: <CheckCross />, kind: "in" }]} cap={2} />
          <Layer width="1365" height="482" viewBox="0 0 1365 482" fill="none">
            <path d="M705 178H707V160H715V236H706V228H705Z" fill="#f1f1f1" />
            <path d="M715 158H707V178M707 228V237.500H715" stroke="#f77b08" strokeWidth="4" strokeLinejoin="round" />
            <path d="M714.500 160V235" stroke="#bbb" />
          </Layer>
          {blocks.map((b) => <Block key={b.x} {...b} />)}
          <Connector x={834} y={158} collar={2} />
        </Canvas>
      </Main>
    </Frame>
  );
}
